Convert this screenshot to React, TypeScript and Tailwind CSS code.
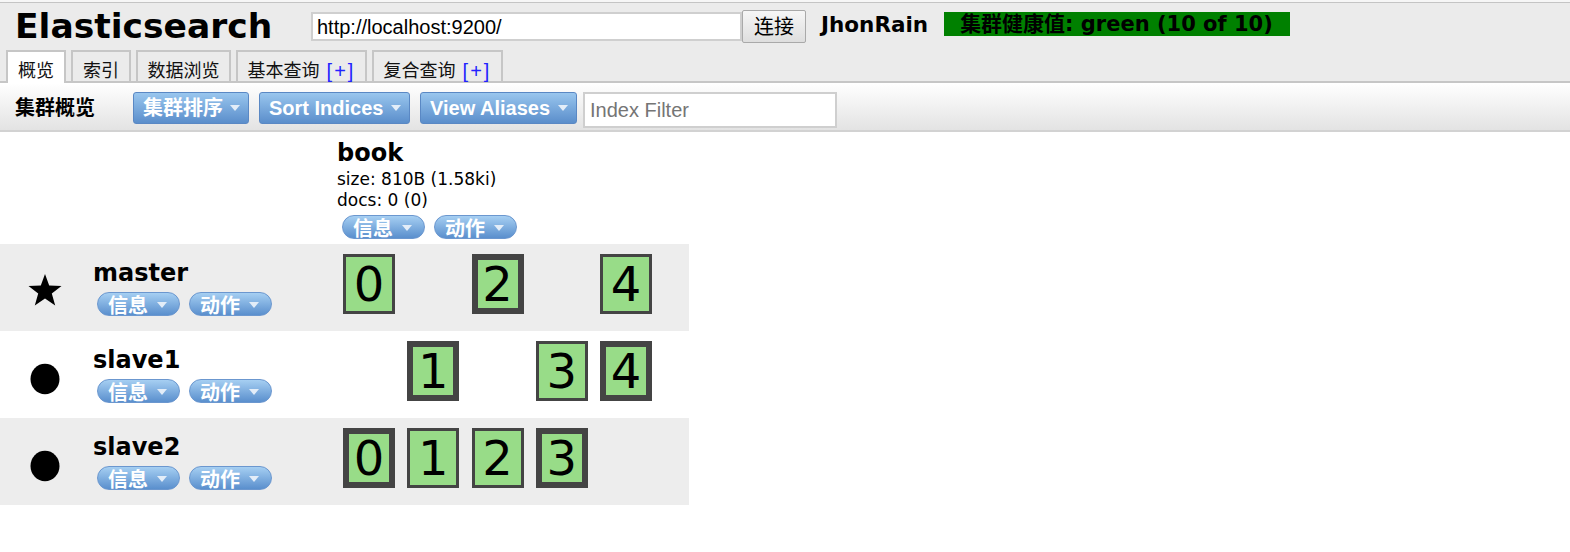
import React from "react";

const VERD = "font-['DejaVu_Sans','Noto_Sans_CJK_SC',sans-serif]";
const ARIAL = "font-['Liberation_Sans','Noto_Sans_CJK_SC',sans-serif]";

function Caret({ className = "" }: { className?: string }) {
  return (
    <svg width="10" height="6" viewBox="0 0 10 6" className={className}>
      <polygon points="0,0 10,0 5,6" fill="#e3edf8" />
    </svg>
  );
}

function ToolButton({ label, w }: { label: string; w: string }) {
  return (
    <div
      className={`${w} h-[32px] flex items-center justify-between pl-[9px] pr-[8px] rounded-[3px] border border-[#5a88c4] bg-gradient-to-b from-[#99c6ee] to-[#5b8ecb] text-white font-bold text-[20px] leading-none ${ARIAL}`}
    >
      <span className="whitespace-nowrap">{label}</span>
      <Caret />
    </div>
  );
}

function Pill({ label }: { label: string }) {
  return (
    <div
      className={`w-[83px] h-[24px] overflow-hidden flex items-start pl-[10px] rounded-full border border-[#6b97cf] bg-gradient-to-b from-[#a6cff2] to-[#5a8fcd] text-white font-bold text-[20px] ${ARIAL}`}
    >
      <span className="leading-none mt-[3px] whitespace-nowrap">{label}</span>
      <Caret className="ml-[9px] mt-[9px]" />
    </div>
  );
}

function Shard({ n, primary }: { n: number; primary: boolean }) {
  return (
    <div
      className={`w-[52px] h-[60px] box-border border-[#444444] bg-[#98dc88] flex items-center justify-center text-black text-[48px] leading-none ${VERD} ${
        primary ? "border-[6px]" : "border-[3px]"
      }`}
    >
      {n}
    </div>
  );
}

type Slot = { n: number; primary: boolean } | null;

function NodeRow({
  name,
  master,
  gray,
  slots,
}: {
  name: string;
  master: boolean;
  gray: boolean;
  slots: Slot[];
}) {
  return (
    <div className={`flex h-[87px] w-[689px] ${gray ? "bg-[#ededed]" : "bg-white"}`}>
      <div className="w-[90px] flex justify-center pt-[29px]">
        {master ? (
          <svg width="36" height="34" viewBox="0 0 36 34">
            <polygon
              points="18,1 22.2,12.6 34.5,12.9 24.8,20.5 28.2,32.5 18,25.4 7.8,32.5 11.2,20.5 1.5,12.9 13.8,12.6"
              fill="#000"
            />
          </svg>
        ) : (
          <svg width="30" height="32" viewBox="0 0 30 32" className="mt-[3px]">
            <ellipse cx="15" cy="16" rx="14.5" ry="15.3" fill="#000" />
          </svg>
        )}
      </div>
      <div className="w-[247px] pl-[3px] pt-[14px]">
        <div className={`text-[24px] font-bold leading-[30px] text-black ${VERD}`}>{name}</div>
        <div className="flex gap-[9px] ml-[4px] mt-[4px]">
          <Pill label="信息" />
          <Pill label="动作" />
        </div>
      </div>
      <div className="pl-[6px] pt-[10px] grid grid-cols-[repeat(5,52px)] gap-x-[12.25px] content-start">
        {slots.map((s, i) => (s ? <Shard key={i} n={s.n} primary={s.primary} /> : <div key={i} />))}
      </div>
    </div>
  );
}

function Tab({ children, active, w }: { children: React.ReactNode; active?: boolean; w: string }) {
  return (
    <div
      className={`${w} flex items-start justify-center pt-[10px] border-2 border-b-0 border-[#c6c6c6] text-[18px] text-[#111] leading-none whitespace-nowrap ${ARIAL} ${
        active ? "bg-white h-[33px] -mb-[2px] relative z-10" : "bg-[#ebebeb] h-[31px]"
      }`}
    >
      {children}
    </div>
  );
}

export default function App() {
  return (
    <div className={`min-h-[552px] w-full bg-white text-black ${VERD}`}>
      <div className="h-[2px] bg-[#f6f6f6]" />
      <div className="bg-[#ebebeb] border-t border-[#c4c4c4]">
        <div className="flex items-center h-[47px] pl-[15px]">
          <h1 className={`w-[296px] text-[34.5px] font-bold leading-none ${VERD}`}>Elasticsearch</h1>
          <div
            className={`w-[431px] h-[29px] bg-white border-2 border-[#cfcfcf] flex items-center pl-[4px] text-[20px] text-black leading-none ${ARIAL}`}
          >
            http://localhost:9200/
          </div>
          <div
            className={`w-[64px] h-[33px] flex items-center justify-center border border-[#a9a9a9] rounded-[2px] bg-gradient-to-b from-[#f6f6f6] to-[#dedede] text-[20px] text-black leading-none ${ARIAL}`}
          >
            连接
          </div>
          <div className={`ml-[15px] text-[21.5px] font-bold leading-none mb-[4px] ${VERD}`}>JhonRain</div>
          <div
            className={`ml-[16px] w-[346px] h-[24px] mb-[5px] bg-[#008000] flex items-center pl-[16px] text-[21px] font-bold text-black leading-none whitespace-nowrap ${VERD}`}
          >
            集群健康值: green (10 of 10)
          </div>
        </div>
        <div className="flex items-end gap-[5px] pl-[6px] h-[31px] border-b-2 border-[#c6c6c6] box-content">
          <Tab active w="w-[60px]">概览</Tab>
          <Tab w="w-[60px]">索引</Tab>
          <Tab w="w-[95px]">数据浏览</Tab>
          <Tab w="w-[131px]">
            基本查询<span className="text-[#2222ff] ml-[7px] text-[20px] tracking-[2px] -mt-[1px]">[+]</span>
          </Tab>
          <Tab w="w-[131px]">
            复合查询<span className="text-[#2222ff] ml-[7px] text-[20px] tracking-[2px] -mt-[1px]">[+]</span>
          </Tab>
        </div>
      </div>
      <div className="h-[49px] pt-[2px] flex items-center bg-gradient-to-b from-white to-[#e3e3e3] border-b-2 border-[#d2d2d2]">
        <div className={`ml-[15px] w-[118px] text-[20px] font-bold leading-none ${ARIAL}`}>集群概览</div>
        <div className="flex items-center gap-[10px]">
          <ToolButton label="集群排序" w="w-[116px]" />
          <ToolButton label="Sort Indices" w="w-[151px]" />
          <ToolButton label="View Aliases" w="w-[157px]" />
        </div>
        <div
          className={`ml-[6px] mt-[4px] w-[254px] h-[36px] bg-white border-2 border-[#cfcfcf] flex items-center pl-[5px] text-[20px] text-[#757575] leading-none ${ARIAL}`}
        >
          Index Filter
        </div>
      </div>
      <div className="flex h-[112px] w-[689px]">
        <div className="w-[337px]" />
        <div className="pt-[6px]">
          <div className={`text-[24px] font-bold leading-[31px] ${VERD}`}>book</div>
          <div className={`text-[17px] leading-[21px] ${VERD}`}>size: 810B (1.58ki)</div>
          <div className={`text-[17px] leading-[21px] ${VERD}`}>docs: 0 (0)</div>
          <div className="flex gap-[9px] ml-[5px] mt-[4px]">
            <Pill label="信息" />
            <Pill label="动作" />
          </div>
        </div>
      </div>
      <NodeRow
        name="master"
        master
        gray
        slots={[{ n: 0, primary: false }, null, { n: 2, primary: true }, null, { n: 4, primary: false }]}
      />
      <NodeRow
        name="slave1"
        master={false}
        gray={false}
        slots={[null, { n: 1, primary: true }, null, { n: 3, primary: false }, { n: 4, primary: true }]}
      />
      <NodeRow
        name="slave2"
        master={false}
        gray
        slots={[
          { n: 0, primary: true },
          { n: 1, primary: false },
          { n: 2, primary: false },
          { n: 3, primary: true },
          null,
        ]}
      />
    </div>
  );
}
